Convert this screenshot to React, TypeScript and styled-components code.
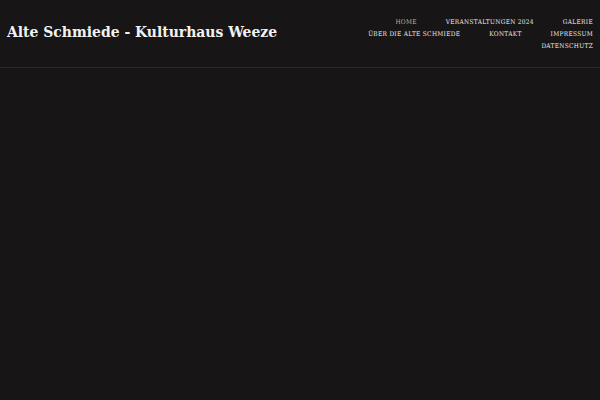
import styled, { createGlobalStyle } from "styled-components";

const GlobalStyle = createGlobalStyle`
    html, body {
        margin: 0;
        padding: 0;
        background-color: #171516;
        height: 100%;
    }
    #root {
        min-height: 100vh;
    }
`;

const Page = styled.div`
    min-height: 100vh;
    background-color: #171516;
`;

const Header = styled.header`
    display: flex;
    justify-content: space-between;
    align-items: flex-start;
    padding: 16px 7px 0 7px;
    height: 51px;
    border-bottom: 1px solid #2b292a;
`;

const SiteTitle = styled.h1`
    margin: 6px 0 0 0;
    font-family: "DejaVu Serif Condensed", "DejaVu Serif", serif;
    font-stretch: condensed;
    font-weight: bold;
    font-size: 15.5px;
    color: #f2f2f2;
    white-space: nowrap;
`;

const Nav = styled.nav`
    display: flex;
    flex-wrap: wrap;
    justify-content: flex-end;
    column-gap: 29px;
    row-gap: 0;
    max-width: 236px;
`;

const NavLink = styled.a<{ $active?: boolean }>`
    font-family: "DejaVu Serif Condensed", "DejaVu Serif", serif;
    font-stretch: condensed;
    font-size: 6.5px;
    line-height: 12px;
    letter-spacing: 0.3px;
    text-transform: uppercase;
    text-decoration: none;
    white-space: nowrap;
    color: ${(p) => (p.$active ? "#c9ad7c" : "#ececec")};
`;

const links = [
    "Home",
    "Veranstaltungen 2024",
    "Galerie",
    "Über die Alte Schmiede",
    "Kontakt",
    "Impressum",
    "Datenschutz",
];

export default function App() {
    return (
        <Page>
            <GlobalStyle />
            <Header>
                <SiteTitle>Alte Schmiede - Kulturhaus Weeze</SiteTitle>
                <Nav>
                    {links.map((l, i) => (
                        <NavLink key={l} href="#" $active={i === 0}>
                            {l}
                        </NavLink>
                    ))}
                </Nav>
            </Header>
        </Page>
    );
}
